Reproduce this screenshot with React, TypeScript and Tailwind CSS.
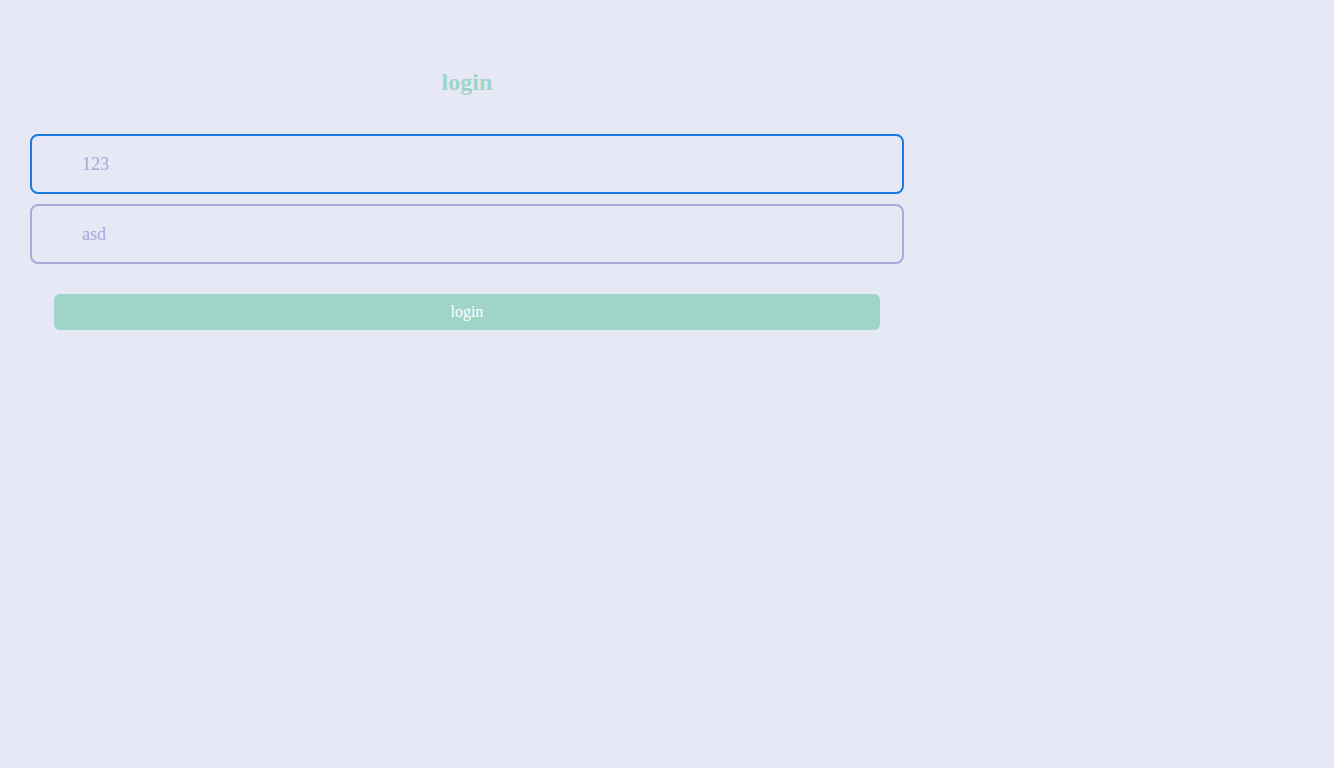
export default function App() {
  return (
    <div
      className="min-h-screen w-full bg-[#e6e8f6]"
      style={{ fontFamily: '"Liberation Serif", "Times New Roman", serif' }}
    >
      <div className="w-[70%] px-[30px] pt-[68px]">
        <h1 className="text-center text-[24px] leading-[28px] font-bold text-[#9fd4c8]">login</h1>

        <div className="mt-[38px] flex flex-col gap-[10px]">
          <input
            type="text"
            placeholder="123"
            className="h-[60px] w-full rounded-[8px] border-2 border-[#1a7ae0] bg-transparent pl-[50px] text-[18px] text-[#a7aad8] placeholder:text-[#a7aad8] outline-none"
          />
          <input
            type="password"
            placeholder="asd"
            className="h-[60px] w-full rounded-[8px] border-2 border-[#a8acd8] bg-transparent pl-[50px] text-[18px] text-[#a7aad8] placeholder:text-[#a7aad8] outline-none"
          />
        </div>

        <div className="mt-[30px] px-[24px]">
          <button className="h-[36px] w-full rounded-[6px] bg-[#9fd4c8] text-[16px] text-white">
            login
          </button>
        </div>
      </div>
    </div>
  );
}
